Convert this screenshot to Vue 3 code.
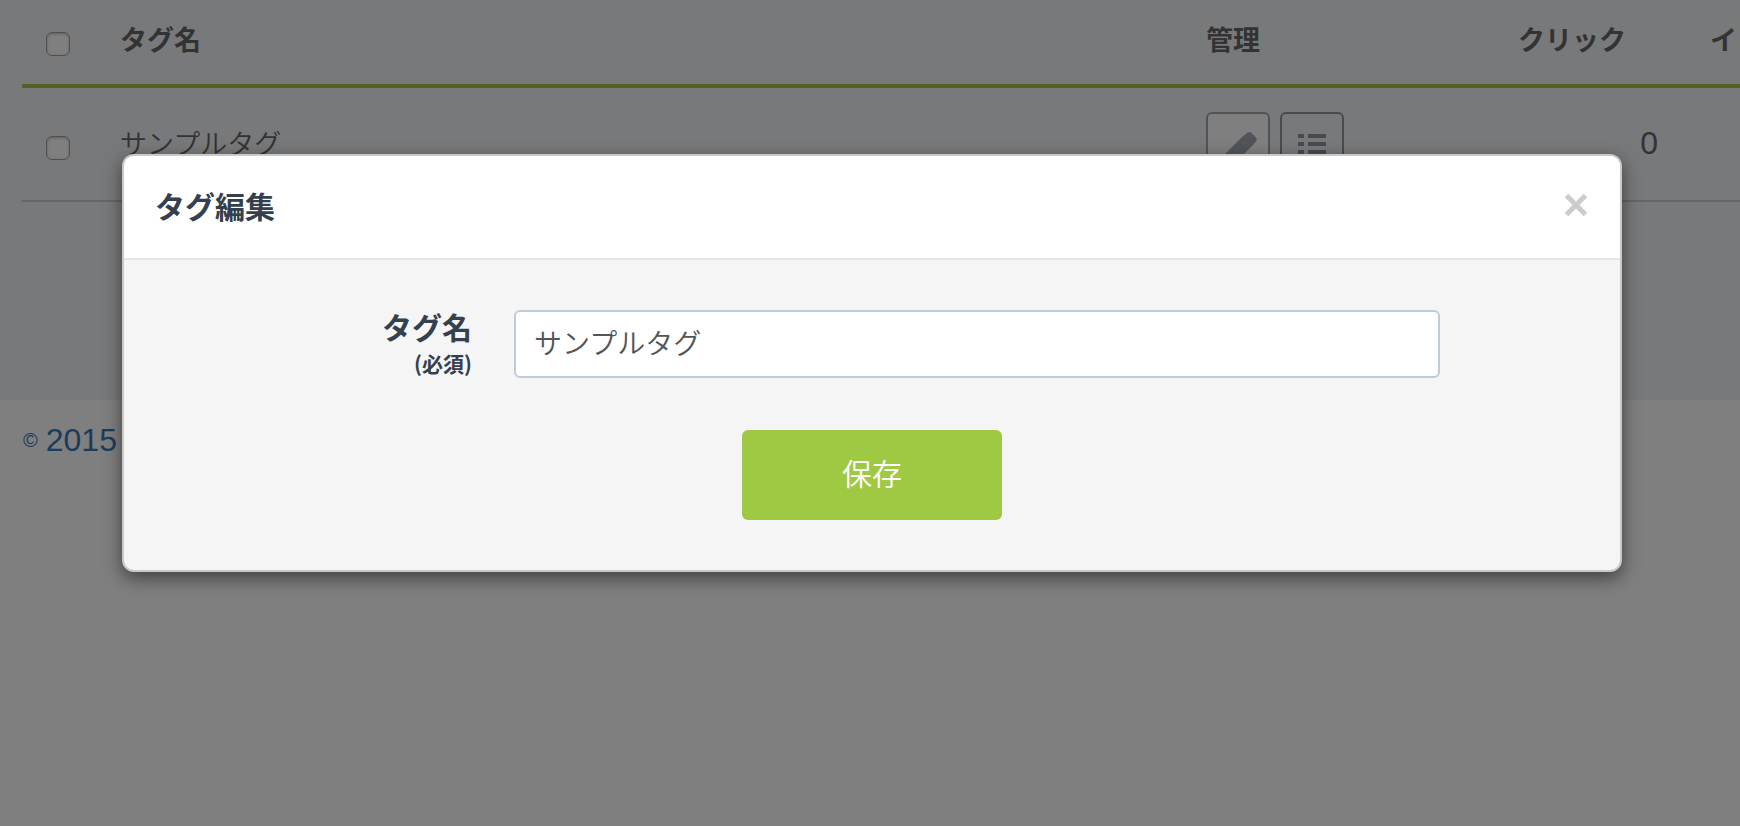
<script setup>
import { ref } from 'vue'

const tagName = ref('サンプルタグ')
</script>

<template>
  <div class="page">
    <main class="content">
      <table class="tags">
        <colgroup>
          <col class="c-check" /><col /><col class="c-manage" /><col class="c-click" /><col class="c-last" />
        </colgroup>
        <thead>
          <tr>
            <th class="check"><input type="checkbox" aria-label="すべて選択" /></th>
            <th>タグ名</th>
            <th>管理</th>
            <th>クリック</th>
            <th class="last">イ</th>
          </tr>
        </thead>
        <tbody>
          <tr>
            <td class="check"><input type="checkbox" aria-label="サンプルタグ" /></td>
            <td>サンプルタグ</td>
            <td class="manage">
              <div class="actions">
                <button type="button" class="icon-btn edit" aria-label="編集">
                  <svg viewBox="0 0 60 60" width="60" height="60">
                    <path d="M34 23 L39 19 Q41.500 17 44 19.500 L47.500 23 Q50 25.500 47.500 28 L44 32 L24 52 L12 55 L15 42 Z" />
                  </svg>
                </button>
                <button type="button" class="icon-btn list" aria-label="一覧">
                  <svg viewBox="0 0 60 60" width="60" height="60">
                    <path d="M16 20h6v4h-6zM26 20h18v4H26zM16 28h6v4h-6zM26 28h18v4H26zM16 36h6v4h-6zM26 36h18v4H26z" />
                  </svg>
                </button>
              </div>
            </td>
            <td class="number">0</td>
            <td></td>
          </tr>
        </tbody>
      </table>
    </main>
    <footer class="footer"><a href="#"><span class="copy">©</span> 2015</a></footer>

    <div class="backdrop">
      <section class="modal" role="dialog" aria-modal="true" aria-labelledby="modal-title">
        <header class="modal-head">
          <h2 id="modal-title">タグ編集</h2>
          <button type="button" class="close" aria-label="閉じる">
            <svg viewBox="0 0 24 24" width="24" height="24"><path d="M2.500 2.500 21.500 21.500M21.500 2.500 2.500 21.500" /></svg>
          </button>
        </header>
        <form class="modal-body" @submit.prevent>
          <div class="field">
            <label for="tag-name">タグ名<small>(必須)</small></label>
            <input id="tag-name" v-model="tagName" type="text" />
          </div>
          <button type="submit" class="save">保存</button>
        </form>
      </section>
    </div>
  </div>
</template>

<style>
body {
  margin: 0;
  background: #fff;
}
</style>

<style scoped>
.page {
  position: relative;
  min-height: 100vh;
  font-family: "Noto Sans CJK JP", sans-serif;
  color: #666;
}
.page *,
.page {
  box-sizing: border-box;
}
.content {
  min-height: 400px;
  padding-left: 22px;
  background: #f1f3f6;
}
.tags {
  width: 100%;
  table-layout: fixed;
  border-collapse: separate;
  border-spacing: 0;
  font-size: 27px;
  line-height: 40px;
}
.c-check { width: 82px; }
.c-manage { width: 312px; }
.c-click { width: 174px; }
.c-last { width: 64px; }
th,
td {
  padding: 19px 16px 25px;
  text-align: left;
  vertical-align: top;
}
th {
  font-weight: 700;
  border-bottom: 4px solid #9fc943;
}
td {
  padding: 35px 16px 24px;
  font-weight: 350;
  border-bottom: 2px solid #cacccf;
}
.check {
  padding-left: 24px;
}
th.check { padding-top: 32px; }
td.check { padding-top: 48px; }
.check input {
  display: block;
  appearance: none;
  width: 24px;
  height: 24px;
  margin: 0;
  border: 1px solid #a0a0a0;
  border-radius: 6px;
  background: #fff;
  box-shadow: inset 0 1px 3px #bbb;
}
.last {
  padding-left: 34px;
  padding-right: 0;
}
td.manage { padding-top: 24px; }
.actions {
  display: flex;
  gap: 10px;
}
.icon-btn {
  width: 64px;
  height: 64px;
  padding: 0;
  border: 2px solid #a0a8b0;
  border-radius: 6px;
  background: #fff;
}
.icon-btn.list {
  border-color: #8d98a2;
  background: transparent;
}
.icon-btn svg {
  display: block;
  fill: #a2a9b3;
}
.icon-btn.list svg { fill: #8d97a3; }
.number {
  padding-right: 18px;
  text-align: right;
  font-family: "Liberation Sans", Arial, sans-serif;
  font-size: 32px;
}
.footer {
  padding: 16px 23px;
  font-family: "Liberation Sans", Arial, sans-serif;
  font-size: 32px;
  line-height: 40px;
}
.footer a {
  display: inline-flex;
  align-items: center;
  gap: 8px;
  color: #337ab7;
  text-decoration: none;
}
.copy { font-size: 20px; }
.backdrop {
  position: absolute;
  inset: 0;
  padding: 154px 118px 40px 122px;
  background: rgba(0, 0, 0, 0.5);
}
.modal {
  border: 2px solid #c9c9c9;
  border-radius: 12px;
  overflow: hidden;
  background: #f5f5f5;
  box-shadow: 0 6px 18px rgba(0, 0, 0, 0.5);
  color: #34404d;
}
.modal-head {
  display: flex;
  align-items: center;
  justify-content: space-between;
  padding: 28px 32px 32px 31px;
  background: #fff;
  border-bottom: 2px solid #e5e5e5;
}
h2 {
  margin: 0;
  font-size: 30px;
  line-height: 42px;
  font-weight: 700;
}
.close {
  padding: 0;
  border: 0;
  background: none;
}
.close svg {
  display: block;
  fill: none;
  stroke: #ccc;
  stroke-width: 5;
}
.modal-body {
  padding: 50px 0;
}
.field {
  display: grid;
  grid-template-columns: 348px minmax(0, 1fr);
  column-gap: 42px;
  align-items: start;
  padding-right: 180px;
  margin-bottom: 46px;
}
label {
  text-align: right;
  font-size: 30px;
  line-height: 32px;
  font-weight: 700;
}
small {
  display: block;
  font-size: 21px;
  line-height: 42px;
}
.field input {
  width: 100%;
  height: 68px;
  padding: 0 18px 4px;
  border: 2px solid #bfccd8;
  border-radius: 6px;
  background: #fff;
  color: #555;
  font: 350 28px "Noto Sans CJK JP", sans-serif;
  outline: 0;
}
.save {
  display: block;
  width: 260px;
  height: 90px;
  margin: 0 auto;
  padding: 0 0 6px;
  border: 0;
  border-radius: 6px;
  background: #9fc943;
  color: #fff;
  font: 350 30px "Noto Sans CJK JP", sans-serif;
}
</style>
